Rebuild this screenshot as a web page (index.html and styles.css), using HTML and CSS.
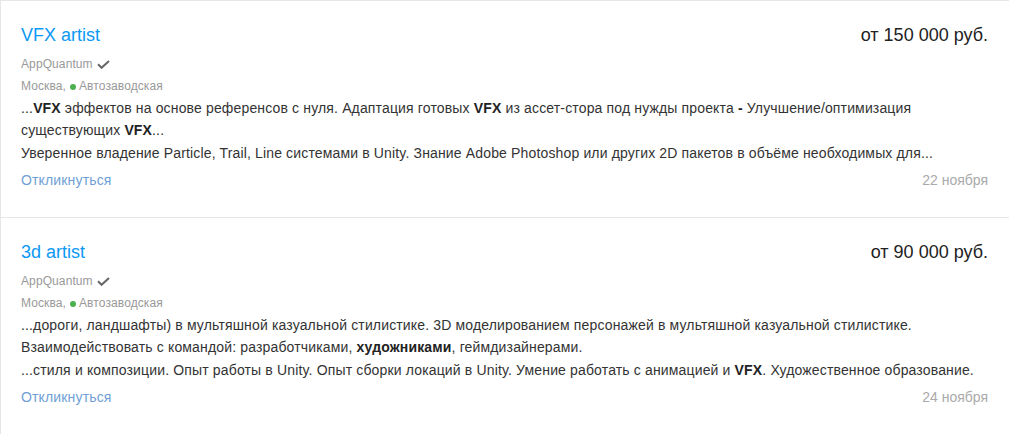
FILE: index.html
```html
<!DOCTYPE html>
<html lang="ru">
<head>
<meta charset="utf-8">
<title>Вакансии</title>
<link rel="stylesheet" href="styles.css">
</head>
<body>
<div class="list">
  <div class="item">
    <div class="head">
      <a class="title" href="#">VFX artist</a>
      <div class="salary">от 150 000 руб.</div>
    </div>
    <div class="company">AppQuantum <svg class="check" width="13" height="9" viewBox="0 0 13 9"><path d="M1 4.3 L4.6 7.8 L12 1" fill="none" stroke="#666" stroke-width="2"/></svg></div>
    <div class="location">Москва, <span class="dot"></span>Автозаводская</div>
    <div class="desc">
      <p>...<b>VFX</b> эффектов на основе референсов с нуля. Адаптация готовых <b>VFX</b> из ассет-стора под нужды проекта <b>-</b> Улучшение/оптимизация существующих <b>VFX</b>...</p>
      <p>Уверенное владение Particle, Trail, Line системами в Unity. Знание Adobe Photoshop или других 2D пакетов в объёме необходимых для...</p>
    </div>
    <div class="foot">
      <a class="reply" href="#">Откликнуться</a>
      <span class="date">22 ноября</span>
    </div>
  </div>
  <div class="item">
    <div class="head">
      <a class="title" href="#">3d artist</a>
      <div class="salary">от 90 000 руб.</div>
    </div>
    <div class="company">AppQuantum <svg class="check" width="13" height="9" viewBox="0 0 13 9"><path d="M1 4.3 L4.6 7.8 L12 1" fill="none" stroke="#666" stroke-width="2"/></svg></div>
    <div class="location">Москва, <span class="dot"></span>Автозаводская</div>
    <div class="desc">
      <p>...дороги, ландшафты) в мультяшной казуальной стилистике. 3D моделированием персонажей в мультяшной казуальной стилистике. Взаимодействовать с командой: разработчиками, <b>художниками</b>, геймдизайнерами.</p>
      <p>...стиля и композиции. Опыт работы в Unity. Опыт сборки локаций в Unity. Умение работать с анимацией и <b>VFX</b>. Художественное образование.</p>
    </div>
    <div class="foot">
      <a class="reply" href="#">Откликнуться</a>
      <span class="date">24 ноября</span>
    </div>
  </div>
</div>
</body>
</html>
```

FILE: styles.css
```css
html, body {
  margin: 0;
  padding: 0;
  background: #fff;
}
body {
  font-family: "Liberation Sans", Arial, sans-serif;
  color: #333;
}
.list {
  border-top: 1px solid #e6e6e6;
  border-left: 1px solid #e6e6e6;
}
.item {
  padding: 22px 21px 25px 20px;
  border-bottom: 1px solid #e6e6e6;
  height: 169px;
}
.head {
  display: flex;
  justify-content: space-between;
  align-items: baseline;
  margin-bottom: 7px;
}
.title {
  font-size: 18px;
  line-height: 24px;
  color: #0c98f5;
  text-decoration: none;
}
.salary {
  font-size: 18px;
  line-height: 24px;
  color: #222;
}
.company,
.location {
  font-size: 12px;
  line-height: 21px;
  color: #999;
  display: flex;
  align-items: center;
  letter-spacing: 0.1px;
}
.location {
  margin-top: 1px;
}
.check {
  margin-left: 4px;
}
.dot {
  width: 6px;
  height: 6px;
  border-radius: 50%;
  background: #4caf50;
  margin: 0 3px 0 4px;
}
.desc {
  font-size: 14px;
  line-height: 22.4px;
  color: #333;
  letter-spacing: 0.15px;
}
.desc p {
  margin: 0;
}
.desc b {
  color: #222;
}
.foot {
  display: flex;
  justify-content: space-between;
  margin-top: 5px;
  font-size: 14px;
  line-height: 22.4px;
}
.reply {
  color: #6f9fd6;
  text-decoration: none;
  letter-spacing: 0.15px;
}
.date {
  color: #aaa;
}
```
